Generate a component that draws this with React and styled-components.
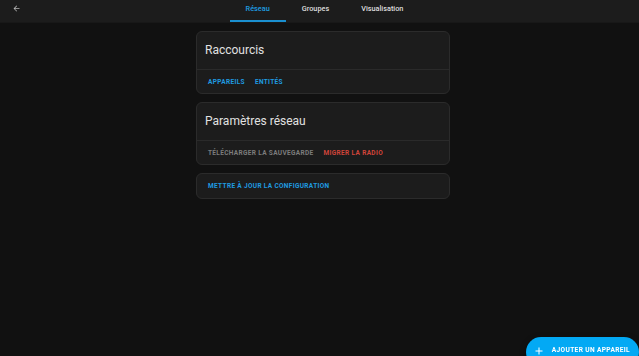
import React from 'react'
import styled, { createGlobalStyle } from 'styled-components'

const Global = createGlobalStyle`
    html, body {
        margin: 0;
        padding: 0;
        background: #111111;
        font-family: Roboto, "Noto Sans", sans-serif;
        -webkit-font-smoothing: antialiased;
    }
`

const Page = styled.div`
    min-height: 356px;
    background: #111111;
`

const Header = styled.header`
    height: 22px;
    display: flex;
    align-items: stretch;
    background: #1c1c1c;
    border-bottom: 1px solid #181818;
`

const BackButton = styled.div`
    width: 32px;
    display: flex;
    align-items: center;
    justify-content: center;
    padding-bottom: 6px;
    color: #b8b8b8;
`

const Tabs = styled.nav`
    flex: 1;
    display: flex;
    justify-content: center;
`

const Spacer = styled.div`
    width: 22px;
`

const Tab = styled.div`
    position: relative;
    padding: 0 16px 6px;
    display: flex;
    align-items: center;
    font-size: 7.3px;
    font-weight: 500;
    color: ${p => (p.active ? '#1e9ce0' : '#dcdcdc')};

    &::after {
        content: '';
        display: ${p => (p.active ? 'block' : 'none')};
        position: absolute;
        left: 0;
        right: 0;
        bottom: 0;
        height: 2px;
        background: #1a8fcf;
    }
`

const Content = styled.main`
    display: flex;
    flex-flow: column;
    gap: 8px;
    width: 254px;
    margin: 0 auto;
    padding: 8px 0 0 7px;
`

const Card = styled.section`
    background: #1c1c1c;
    border: 1px solid #2b2b2b;
    border-radius: 6px;
`

const CardTitle = styled.h2`
    margin: 0;
    height: 37px;
    box-sizing: border-box;
    display: flex;
    align-items: center;
    padding: 0 8px 2px;
    font-size: 12px;
    font-weight: 400;
    color: #e1e1e1;
`

const Actions = styled.div`
    display: flex;
    align-items: center;
    gap: 10px;
    height: 24px;
    box-sizing: border-box;
    padding: 0 11px;
    border-top: ${p => (p.divided ? '1px solid #2a2a2a' : 'none')};
`

const ActionButton = styled.span`
    font-size: 6.5px;
    font-weight: 700;
    letter-spacing: 0.34px;
    text-transform: uppercase;
    color: ${p => p.color || '#1f9be0'};
`

const Fab = styled.button`
    position: fixed;
    right: 0;
    bottom: -11px;
    height: 30px;
    display: flex;
    align-items: flex-start;
    gap: 9px;
    padding: 9px 9px 0 9px;
    box-sizing: border-box;
    border: none;
    border-radius: 15px;
    background: #03a9f4;
    color: #ffffff;
    font-family: Roboto, sans-serif;
    font-size: 6.6px;
    font-weight: 700;
    letter-spacing: 0.35px;
    box-shadow: 0 2px 6px rgba(0, 0, 0, 0.4);

    svg {
        margin-top: 0.5px;
    }
`

const App = () => {
    return (
        <Page>
            <Global />
            <Header>
                <BackButton>
                    <svg width="9" height="9" viewBox="0 0 24 24" fill="currentColor">
                        <path d="M20 11v2H8l5.5 5.5-1.42 1.42L4.16 12l7.92-7.92L13.5 5.5 8 11h12z" />
                    </svg>
                </BackButton>
                <Tabs>
                    <Tab active>Réseau</Tab>
                    <Tab>Groupes</Tab>
                    <Tab>Visualisation</Tab>
                </Tabs>
                <Spacer />
            </Header>

            <Content>
                <Card>
                    <CardTitle>Raccourcis</CardTitle>
                    <Actions divided>
                        <ActionButton>Appareils</ActionButton>
                        <ActionButton>Entités</ActionButton>
                    </Actions>
                </Card>

                <Card>
                    <CardTitle>Paramètres réseau</CardTitle>
                    <Actions divided>
                        <ActionButton color="#7c7c7c">Télécharger la sauvegarde</ActionButton>
                        <ActionButton color="#d0443a">Migrer la radio</ActionButton>
                    </Actions>
                </Card>

                <Card>
                    <Actions>
                        <ActionButton>Mettre à jour la configuration</ActionButton>
                    </Actions>
                </Card>
            </Content>

            <Fab>
                <svg width="8" height="8" viewBox="4 4 16 16" fill="currentColor">
                    <path d="M19 13h-6v6h-2v-6H5v-2h6V5h2v6h6v2z" />
                </svg>
                AJOUTER UN APPAREIL
            </Fab>
        </Page>
    )
}

export default App
